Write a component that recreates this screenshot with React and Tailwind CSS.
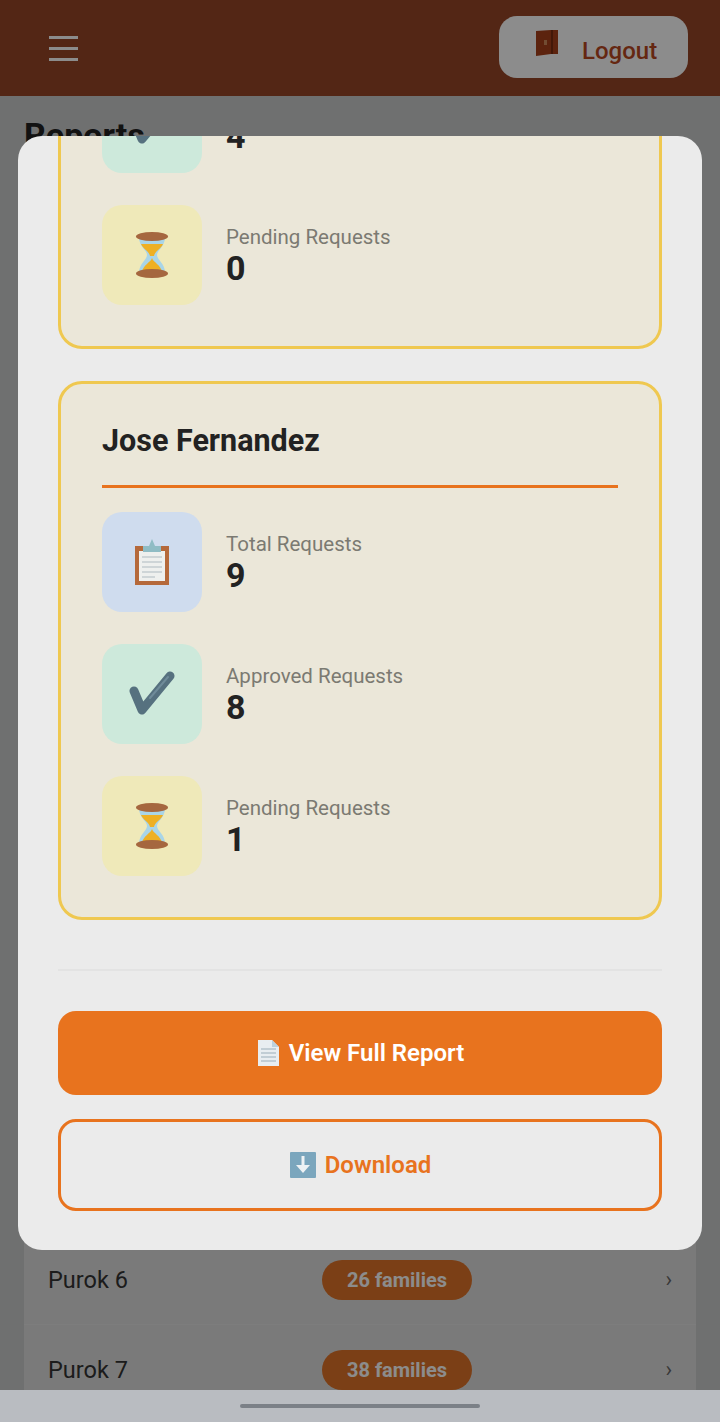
const font = { fontFamily: 'Roboto, sans-serif' }

function ClipboardIcon() {
  return (
    <svg width="36" height="48" viewBox="0 0 36 48">
      <rect x="1" y="8" width="34" height="39" fill="#b5693a" />
      <rect x="5" y="13" width="26" height="30" fill="#eef0ee" />
      <path d="M8 19h20M8 24h20M8 29h20M8 34h20M8 39h13" stroke="#c3cbd0" strokeWidth="1.5" />
      <path d="M9 8h6l3-7 3 7h6v6H9z" fill="#8fbcc4" />
    </svg>
  )
}

function CheckIcon() {
  return (
    <svg width="48" height="46" viewBox="0 0 48 46">
      <path d="M6 20l8 19L42 5" fill="none" stroke="#56717f" strokeWidth="9" strokeLinecap="round" strokeLinejoin="round" />
      <path d="M22 27L40 6" fill="none" stroke="#6f8b99" strokeWidth="2" strokeLinecap="round" />
    </svg>
  )
}

function HourglassIcon() {
  return (
    <svg width="34" height="46" viewBox="0 0 34 46">
      <path d="M4 5h26c0 10-8 13-8 18s8 8 8 18H4c0-10 8-13 8-18S4 15 4 5z" fill="#a9d5e8" />
      <path d="M6 12h22c-2 5-8 7-9 12h-4c-1-5-7-7-9-12z" fill="#eeb023" />
      <path d="M17 26c1 4 9 7 10 14H7c1-7 9-10 10-14z" fill="#eeb023" />
      <ellipse cx="17" cy="4.5" rx="16" ry="4.5" fill="#a5673f" />
      <ellipse cx="17" cy="41.5" rx="16" ry="4.5" fill="#a5673f" />
    </svg>
  )
}

function PageIcon() {
  return (
    <svg width="24" height="26" viewBox="0 0 24 26">
      <path d="M2 0h14l7 7v19H2z" fill="#e8edf1" />
      <path d="M16 0l7 7h-7z" fill="#bcd0dc" />
      <path d="M5 9h15M5 13h15M5 17h15M5 21h15" stroke="#b4c2cc" strokeWidth="1.5" />
    </svg>
  )
}

function DownloadIcon() {
  return (
    <svg width="28" height="28" viewBox="0 0 28 28">
      <rect x="1" y="1" width="26" height="26" rx="1" fill="#7ba6bd" />
      <path d="M14 5v13" stroke="#eef2f4" strokeWidth="3" />
      <path d="M7 14l7 8 7-8z" fill="#eef2f4" />
    </svg>
  )
}

function DoorIcon() {
  return (
    <svg width="22" height="26" viewBox="0 0 22 26">
      <path d="M0 1l15-1h7v24h-7L0 26z" fill="#a8401a" />
      <path d="M15 0h2v24h-2z" fill="#7a2c10" />
      <rect x="8" y="10" width="3" height="5" fill="#d08a5c" />
    </svg>
  )
}

function StatRow({ icon, tile, label, value }) {
  return (
    <div className="flex items-center gap-6">
      <div className={`flex h-[100px] w-[100px] items-center justify-center rounded-[20px] ${tile}`}>
        {icon}
      </div>
      <div className="pt-[1px]">
        <div className="text-[20.5px] leading-[24px] text-[#7b7a72]">{label}</div>
        <div className="text-[34px] leading-[38px] font-bold text-[#222222]">{value}</div>
      </div>
    </div>
  )
}

function ResidentCard({ name, children }) {
  return (
    <div className="flex shrink-0 flex-col rounded-[24px] border-[3px] border-[#efc850] bg-[#ebe7d9] px-[41px] pt-[37px] pb-[41px]">
      {name && (
        <h3 className="mb-[24px] border-b-[3px] border-[#e8731e] pb-[24px] text-[30.5px] leading-[40px] font-bold text-[#222222]">
          {name}
        </h3>
      )}
      <div className="flex flex-col gap-8">{children}</div>
    </div>
  )
}

function PurokRow({ name, families }) {
  return (
    <div className="flex h-[90px] shrink-0 items-center justify-between border-b border-[#e3e3e3] px-[24px]">
      <span className="w-[274px] pt-[3px] text-[23.5px] text-[#333333]">{name}</span>
      <span className="flex h-[40px] w-[150px] items-center justify-center rounded-full bg-[#e17428] text-[20px] font-bold text-white">
        {families} families
      </span>
      <span className="ml-auto text-[22px] text-[#666666]">›</span>
    </div>
  )
}

export default function App() {
  return (
    <div className="relative flex h-[1422px] w-[720px] flex-col overflow-hidden bg-[#cbcdcd]" style={font}>
      <header className="flex h-[96px] shrink-0 items-center justify-between bg-[#974527] pr-[32px] pb-[2px] pl-[49px]">
        <div className="mt-[2px] flex w-[29px] flex-col gap-[8px]">
          <span className="h-[3px] bg-white"></span>
          <span className="h-[3px] bg-white"></span>
          <span className="h-[3px] bg-white"></span>
        </div>
        <button className="flex h-[62px] w-[189px] items-center gap-[24px] rounded-[18px] bg-white pl-[37px] text-[24px] font-medium text-[#b8481f]">
          <span className="mb-[8px]">
            <DoorIcon />
          </span>
          <span className="mt-[8px]">Logout</span>
        </button>
      </header>

      <main className="flex min-h-0 flex-1 flex-col overflow-hidden px-[24px]">
        <h1 className="mt-[20px] text-[34px] leading-[38px] font-bold text-[#222222]">Reports</h1>
        <div className="mb-[-25px] flex min-h-0 flex-1 flex-col justify-end bg-[#dfdfdf]">
          <PurokRow name="Purok 6" families={26} />
          <PurokRow name="Purok 7" families={38} />
        </div>
      </main>

      <div className="flex h-[32px] shrink-0 items-center justify-center bg-[#b9bcc1]">
        <span className="h-[4px] w-[240px] rounded-full bg-[#7b8087]"></span>
      </div>

      <div className="absolute inset-x-0 top-0 bottom-[32px] bg-black/45"></div>

      <div className="absolute top-[136px] left-[18px] flex h-[1114px] w-[684px] flex-col justify-end overflow-hidden rounded-[24px] bg-[#ebebeb] px-[40px] pb-[39px]">
        <div className="flex shrink-0 flex-col gap-8">
          <ResidentCard>
            <StatRow icon={<CheckIcon />} tile="bg-[#cde9db]" label="Approved Requests" value={4} />
            <StatRow icon={<HourglassIcon />} tile="bg-[#efe9b9]" label="Pending Requests" value={0} />
          </ResidentCard>
          <ResidentCard name="Jose Fernandez">
            <StatRow icon={<ClipboardIcon />} tile="bg-[#cfdcee]" label="Total Requests" value={9} />
            <StatRow icon={<CheckIcon />} tile="bg-[#cde9db]" label="Approved Requests" value={8} />
            <StatRow icon={<HourglassIcon />} tile="bg-[#efe9b9]" label="Pending Requests" value={1} />
          </ResidentCard>
        </div>
        <div className="mt-[49px] h-[2px] shrink-0 bg-[#e3e3e3]"></div>
        <button className="mt-[40px] flex h-[84px] shrink-0 items-center justify-center gap-[9px] rounded-[18px] bg-[#e8731e] text-[24px] font-semibold text-white">
          <PageIcon />
          View Full Report
        </button>
        <button className="mt-[24px] flex h-[92px] shrink-0 items-center justify-center gap-[8px] rounded-[18px] border-[3px] border-[#e8731e] text-[24px] font-semibold text-[#e8731e]">
          <DownloadIcon />
          Download
        </button>
      </div>
    </div>
  )
}
